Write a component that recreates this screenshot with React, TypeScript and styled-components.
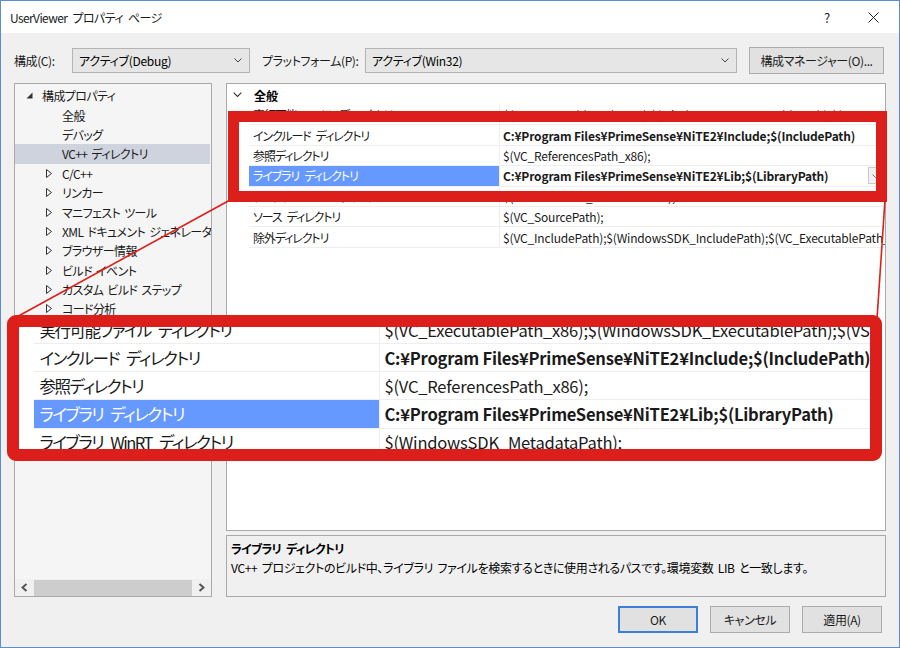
import styled, { createGlobalStyle } from "styled-components";

const GlobalStyle = createGlobalStyle`
  html, body {
    margin: 0;
    padding: 0;
    background: #ffffff;
  }
  body {
    font-family: "Noto Sans CJK JP", "Noto Sans", sans-serif;
    font-feature-settings: "palt";
    font-size: 12px;
    color: #000000;
  }
`;

const RED = "#dc1f1a";

const Window = styled.div`
  position: relative;
  width: 900px;
  height: 648px;
  box-sizing: border-box;
  border: 1px solid #5b8dd6;
  display: flex;
  flex-direction: column;
  overflow: hidden;
`;

const TitleBar = styled.div`
  height: 32px;
  flex: none;
  background: #ffffff;
  display: flex;
  align-items: center;
  padding-left: 9px;
  padding-right: 3px;
`;

const TitleText = styled.div`
  flex: 1;
  font-size: 12px;
  letter-spacing: -0.6px;
  word-spacing: 3px;
  color: #1a1a1a;
`;

const CaptionButton = styled.div`
  width: 46px;
  height: 32px;
  display: flex;
  align-items: center;
  justify-content: center;
  font-size: 13px;
  color: #222;
`;

const Body = styled.div`
  flex: 1;
  background: #f0f0f0;
  padding: 15px 13px 0 13px;
  display: flex;
  flex-direction: column;
`;

const Toolbar = styled.div`
  height: 25px;
  display: flex;
  align-items: center;
`;

const Label = styled.div<{ $width: number }>`
  width: ${({ $width }) => $width}px;
  flex: none;
  white-space: nowrap;
  letter-spacing: -0.4px;
  color: #1a1a1a;
`;

const Combo = styled.div<{ $width: number }>`
  width: ${({ $width }) => $width}px;
  height: 25px;
  box-sizing: border-box;
  flex: none;
  border: 1px solid #b4b4b4;
  background: #e6e6e6;
  display: flex;
  align-items: center;
  padding: 0 7px 0 6px;
  margin-right: 12px;
`;

const ComboText = styled.div`
  flex: 1;
  letter-spacing: -0.3px;
`;

const PushButton = styled.div<{ $width: number; $focused?: boolean }>`
  width: ${({ $width }) => $width}px;
  height: 27px;
  box-sizing: border-box;
  flex: none;
  border: ${({ $focused }) => ($focused ? "2px solid #3c7fd6" : "1px solid #adadad")};
  background: #e1e1e1;
  display: flex;
  align-items: center;
  justify-content: center;
  letter-spacing: -0.4px;
  color: #1a1a1a;
`;

const Content = styled.div`
  margin-top: 10px;
  height: 514px;
  display: flex;
  gap: 14px;
`;

const Tree = styled.div`
  width: 198px;
  flex: none;
  box-sizing: border-box;
  border: 1px solid #a9a9a9;
  background: #f5f5f5;
  display: flex;
  flex-direction: column;
  overflow: hidden;
`;

const TreeList = styled.div`
  flex: 1;
  padding-top: 2px;
  overflow: hidden;
`;

const TreeRow = styled.div<{ $level: number; $selected?: boolean }>`
  height: 19.4px;
  display: flex;
  align-items: center;
  white-space: nowrap;
  letter-spacing: -0.6px;
  word-spacing: 2px;
  padding-left: ${({ $level }) => ($level === 0 ? 11 : 31)}px;
  margin-right: 1px;
  background: ${({ $selected }) => ($selected ? "#cfd3de" : "transparent")};
  color: #1a1a1a;
`;

const Twisty = styled.span`
  width: 16px;
  flex: none;
  display: flex;
  align-items: center;
`;

const HScroll = styled.div`
  height: 17px;
  flex: none;
  display: flex;
  align-items: center;
  background: #f0f0f0;
`;

const ScrollArrow = styled.div`
  width: 19px;
  height: 17px;
  display: flex;
  align-items: center;
  justify-content: center;
`;

const ScrollThumb = styled.div`
  flex: 1;
  height: 16px;
  background: #cdcdcd;
`;

const RightColumn = styled.div`
  width: 660px;
  flex: none;
  display: flex;
  flex-direction: column;
  gap: 4px;
`;

const Grid = styled.div`
  height: 448px;
  box-sizing: border-box;
  border: 1px solid #a9a9a9;
  background: #ffffff;
  overflow: hidden;
`;

const Category = styled.div`
  height: 20px;
  display: flex;
  align-items: center;
  font-weight: bold;
  padding-left: 6px;
  margin-top: 1px;
`;

const CategoryArrow = styled.span`
  width: 21px;
  display: flex;
  align-items: center;
`;

const PropRow = styled.div<{ $scale: number }>`
  height: ${({ $scale }) => 20.4 * $scale}px;
  display: flex;
  box-sizing: border-box;
  padding-left: ${({ $scale }) => ($scale > 1 ? 15 : 22)}px;
  font-size: ${({ $scale }) => 12 * $scale}px;
  white-space: nowrap;
`;

const NameCell = styled.div<{ $scale: number; $selected?: boolean }>`
  width: ${({ $scale }) => 251 * $scale}px;
  flex: none;
  box-sizing: border-box;
  display: flex;
  align-items: center;
  padding-left: ${({ $scale }) => 4 * $scale}px;
  letter-spacing: ${({ $scale }) => (-1.1 * $scale).toFixed(2)}px;
  word-spacing: ${({ $scale }) => (3.5 * $scale).toFixed(2)}px;
  border-bottom: 1px solid #eeeef2;
  border-right: 1px solid #eeeef2;
  background: ${({ $selected }) => ($selected ? "#6699ff" : "#ffffff")};
  color: ${({ $selected }) => ($selected ? "#ffffff" : "#1a1a1a")};
  overflow: hidden;
`;

const ValueCell = styled.div<{ $scale: number; $bold?: boolean }>`
  flex: 1;
  min-width: 0;
  box-sizing: border-box;
  display: flex;
  align-items: center;
  padding-left: ${({ $scale }) => 3 * $scale}px;
  letter-spacing: ${({ $scale }) => (-0.17 * $scale).toFixed(2)}px;
  border-bottom: 1px solid #eeeef2;
  font-weight: ${({ $bold }) => ($bold ? "bold" : "normal")};
  color: #1a1a1a;
  overflow: hidden;
`;

const ValueText = styled.span`
  flex: 1;
  overflow: hidden;
`;

const DropButton = styled.div`
  width: 14px;
  height: 17px;
  flex: none;
  margin-right: 3px;
  box-sizing: border-box;
  border: 1px solid #c8c8c8;
  background: #f2f2f2;
  display: flex;
  align-items: center;
  justify-content: center;
`;

const Description = styled.div`
  height: 62px;
  box-sizing: border-box;
  border: 1px solid #a9a9a9;
  background: #f0f0f0;
  padding: 3px 4px;
  line-height: 19px;
  letter-spacing: -0.35px;
  word-spacing: 2px;
`;

const DescTitle = styled.div`
  font-weight: bold;
  letter-spacing: -0.8px;
  word-spacing: 3px;
`;

const Footer = styled.div`
  margin-top: 9px;
  display: flex;
  justify-content: flex-end;
  gap: 12px;
  padding-right: 4px;
`;

const Lines = styled.svg`
  position: absolute;
  left: 0;
  top: 0;
  pointer-events: none;
`;

const HighlightFrame = styled.div`
  position: absolute;
  left: 227px;
  top: 110px;
  width: 659px;
  height: 91px;
  box-sizing: border-box;
  border: 11px solid ${RED};
  pointer-events: none;
`;

const Inset = styled.div`
  position: absolute;
  left: 6px;
  top: 314px;
  width: 875px;
  height: 146px;
  box-sizing: border-box;
  border: 12px solid ${RED};
  border-radius: 9px;
  background: #ffffff;
  overflow: hidden;
`;

const InsetRows = styled.div`
  margin-top: -11px;
`;

type Prop = { name: string; value: string; bold?: boolean; selected?: boolean };

const props: Prop[] = [
  {
    name: "実行可能ファイル ディレクトリ",
    value:
      "$(VC_ExecutablePath_x86);$(WindowsSDK_ExecutablePath);$(VS_ExecutablePath);$(MSBuild_ExecutablePath);$(SystemRoot)¥SysWow64;$(FxCopDir);$(PATH);",
  },
  {
    name: "インクルード ディレクトリ",
    value: "C:¥Program Files¥PrimeSense¥NiTE2¥Include;$(IncludePath)",
    bold: true,
  },
  { name: "参照ディレクトリ", value: "$(VC_ReferencesPath_x86);" },
  {
    name: "ライブラリ ディレクトリ",
    value: "C:¥Program Files¥PrimeSense¥NiTE2¥Lib;$(LibraryPath)",
    bold: true,
    selected: true,
  },
  { name: "ライブラリ WinRT ディレクトリ", value: "$(WindowsSDK_MetadataPath);" },
  { name: "ソース ディレクトリ", value: "$(VC_SourcePath);" },
  {
    name: "除外ディレクトリ",
    value:
      "$(VC_IncludePath);$(WindowsSDK_IncludePath);$(VC_ExecutablePath_x86);$(VC_LibraryPath_x86);",
  },
];

const treeItems = [
  { label: "全般" },
  { label: "デバッグ" },
  { label: "VC++ ディレクトリ", selected: true },
  { label: "C/C++", branch: true },
  { label: "リンカー", branch: true },
  { label: "マニフェスト ツール", branch: true },
  { label: "XML ドキュメント ジェネレーター", branch: true },
  { label: "ブラウザー情報", branch: true },
  { label: "ビルド イベント", branch: true },
  { label: "カスタム ビルド ステップ", branch: true },
  { label: "コード分析", branch: true },
];

const Chevron = ({ size = 8, color = "#444" }: { size?: number; color?: string }) => (
  <svg width={size} height={size / 2 + 1} viewBox="0 0 8 5">
    <polyline points="0.5,0.5 4,4 7.5,0.5" fill="none" stroke={color} strokeWidth="1" />
  </svg>
);

const PropRows = ({ scale }: { scale: number }) => (
  <>
    {props.map((p) => (
      <PropRow key={p.name} $scale={scale}>
        <NameCell $scale={scale} $selected={p.selected}>
          {p.name}
        </NameCell>
        <ValueCell $scale={scale} $bold={p.bold}>
          <ValueText>{p.value}</ValueText>
          {p.selected && scale === 1 && (
            <DropButton>
              <Chevron size={7} color="#666" />
            </DropButton>
          )}
        </ValueCell>
      </PropRow>
    ))}
  </>
);

export default function App() {
  return (
    <Window>
      <GlobalStyle />
      <TitleBar>
        <TitleText>UserViewer プロパティ ページ</TitleText>
        <CaptionButton>?</CaptionButton>
        <CaptionButton>
          <svg width="11" height="11" viewBox="0 0 11 11">
            <path d="M0.5 0.5 L10.5 10.5 M10.5 0.5 L0.5 10.5" stroke="#222" strokeWidth="1" />
          </svg>
        </CaptionButton>
      </TitleBar>

      <Body>
        <Toolbar>
          <Label $width={58}>構成(C):</Label>
          <Combo $width={178}>
            <ComboText>アクティブ(Debug)</ComboText>
            <Chevron />
          </Combo>
          <Label $width={103}>プラットフォーム(P):</Label>
          <Combo $width={372}>
            <ComboText>アクティブ(Win32)</ComboText>
            <Chevron />
          </Combo>
          <PushButton $width={135}>構成マネージャー(O)...</PushButton>
        </Toolbar>

        <Content>
          <Tree>
            <TreeList>
              <TreeRow $level={0}>
                <Twisty>
                  <svg width="7" height="7" viewBox="0 0 7 7">
                    <polygon points="6.5,0.5 6.5,6.5 0.5,6.5" fill="#333" />
                  </svg>
                </Twisty>
                構成プロパティ
              </TreeRow>
              {treeItems.map((item) => (
                <TreeRow key={item.label} $level={1} $selected={item.selected}>
                  <Twisty>
                    {item.branch && (
                      <svg width="6" height="9" viewBox="0 0 6 9">
                        <polygon points="0.5,0.5 5.5,4.5 0.5,8.5" fill="none" stroke="#333" strokeWidth="1" />
                      </svg>
                    )}
                  </Twisty>
                  {item.label}
                </TreeRow>
              ))}
            </TreeList>
            <HScroll>
              <ScrollArrow>
                <svg width="7" height="9" viewBox="0 0 7 9">
                  <polyline points="5.5,1 1.5,4.5 5.5,8" fill="none" stroke="#555" strokeWidth="2" />
                </svg>
              </ScrollArrow>
              <ScrollThumb />
              <ScrollArrow>
                <svg width="7" height="9" viewBox="0 0 7 9">
                  <polyline points="1.5,1 5.5,4.5 1.5,8" fill="none" stroke="#555" strokeWidth="2" />
                </svg>
              </ScrollArrow>
            </HScroll>
          </Tree>

          <RightColumn>
            <Grid>
              <Category>
                <CategoryArrow>
                  <Chevron size={9} color="#333" />
                </CategoryArrow>
                全般
              </Category>
              <PropRows scale={1} />
            </Grid>
            <Description>
              <DescTitle>ライブラリ ディレクトリ</DescTitle>
              <div>
                VC++ プロジェクトのビルド中、ライブラリ ファイルを検索するときに使用されるパスです。環境変数 LIB と一致します。
              </div>
            </Description>
          </RightColumn>
        </Content>

        <Footer>
          <PushButton $width={80} $focused>
            OK
          </PushButton>
          <PushButton $width={80}>キャンセル</PushButton>
          <PushButton $width={80}>適用(A)</PushButton>
        </Footer>
      </Body>

      <Lines width="898" height="646" viewBox="0 0 898 646">
        <line x1="229" y1="199" x2="12" y2="318" stroke={RED} strokeWidth="1.6" />
        <line x1="884" y1="199" x2="876" y2="318" stroke={RED} strokeWidth="1.6" />
      </Lines>
      <HighlightFrame />
      <Inset>
        <InsetRows>
          <PropRows scale={1.38} />
        </InsetRows>
      </Inset>
    </Window>
  );
}
